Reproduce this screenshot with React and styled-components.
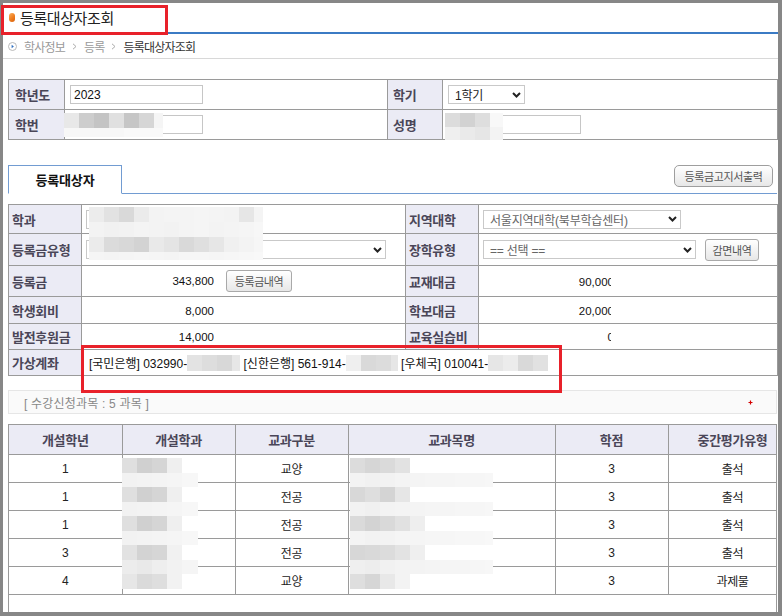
import React from 'react';
import styled, { createGlobalStyle } from 'styled-components';

const Global = createGlobalStyle`
  html, body { margin: 0; padding: 0; background: #fff; }
  body {
    font-family: "Liberation Sans", "Noto Sans CJK KR", sans-serif;
    font-size: 12px;
    color: #333;
  }
  * { box-sizing: border-box; }
`;

const Frame = styled.div`
  position: relative;
  width: 782px;
  height: 616px;
  border-style: solid;
  border-color: #878787;
  border-width: 3px 4px 4px 3px;
  background: #fff;
  display: flex;
  flex-direction: column;
`;

const TitleBar = styled.div`
  height: 31px;
  flex: none;
  border-bottom: 2px solid #3b7bc4;
  display: flex;
  align-items: center;
  gap: 5px;
  padding-left: 6px;
`;

const Bullet = styled.span`
  width: 6px;
  height: 9px;
  border-radius: 3px;
  background: linear-gradient(135deg, #f9b062 0%, #ef7d1e 55%, #d65f0c 100%);
`;

const Title = styled.h1`
  margin: 0;
  font-size: 15px;
  font-weight: normal;
  letter-spacing: -0.4px;
  color: #222;
`;

const Crumbs = styled.nav`
  height: 25px;
  flex: none;
  border-bottom: 1px solid #d8d8d8;
  display: flex;
  align-items: center;
  gap: 7px;
  padding-left: 5px;
`;

const Crumb = styled.span`
  font-size: 12px;
  letter-spacing: -0.8px;
  color: ${p => (p.$current ? '#333' : '#9a9a9a')};
`;

const CrumbIcon = () => (
  <svg width="9" height="9" viewBox="0 0 9 9">
    <circle cx="4.5" cy="4.5" r="4" fill="#fff" stroke="#b9b9b9" />
    <path d="M3.6 2.7 L5.9 4.5 L3.6 6.3 Z" fill="#2f6fc0" />
  </svg>
);

const Sep = () => (
  <svg width="5" height="7" viewBox="0 0 5 7">
    <path d="M1 0.8 L4 3.5 L1 6.2" fill="none" stroke="#aaa" strokeWidth="1" />
  </svg>
);

const Table = styled.table`
  width: 769px;
  flex: none;
  border-collapse: collapse;
  table-layout: fixed;
  margin: ${p => p.$top}px 0 0 5px;
`;

const Col = styled.col`
  width: ${p => p.$w}px;
`;

const Row = styled.tr`
  height: ${p => p.$h}px;
`;

const Label = styled.th`
  border: 1px solid #9a9a9a;
  background: #ebebf5;
  color: #4a4658;
  font-size: 13px;
  font-weight: bold;
  letter-spacing: -0.3px;
  text-align: left;
  padding: 0 0 0 ${p => p.$pad}px;
  white-space: nowrap;
`;

const Cell = styled.td`
  border: 1px solid #9a9a9a;
  padding: 0 0 0 ${p => p.$pad ?? 4}px;
  font-size: 12px;
  color: #222;
  white-space: nowrap;
`;

const Field = styled.input`
  width: ${p => p.$w}px;
  height: 19px;
  border: 1px solid #c6c6c6;
  padding: 0 3px;
  font-family: inherit;
  font-size: 12px;
  color: #111;
  vertical-align: middle;
  outline: none;
`;

const SelectBox = styled.div`
  display: inline-flex;
  align-items: center;
  justify-content: space-between;
  width: ${p => p.$w}px;
  height: 19px;
  border: 1px solid #c9c9c9;
  background: #fff;
  padding: 0 3px 0 6px;
  font-size: 12px;
  letter-spacing: -0.2px;
  color: ${p => (p.$muted ? '#666' : '#222')};
  vertical-align: middle;
`;

const Chevron = () => (
  <svg width="9" height="6" viewBox="0 0 9 6">
    <polyline points="1,1 4.5,4.5 8,1" fill="none" stroke="#222" strokeWidth="2" />
  </svg>
);

const Select = ({ w, muted, children }) => (
  <SelectBox $w={w} $muted={muted}>
    <span>{children}</span>
    <Chevron />
  </SelectBox>
);

const Btn = styled.button`
  width: ${p => p.$w}px;
  height: 22px;
  padding: 0;
  margin-left: ${p => p.$gap ?? 0}px;
  border: 1px solid #a9a9a9;
  border-radius: ${p => p.$r ?? 3}px;
  background: linear-gradient(#ffffff, #e7e7e7);
  font-family: inherit;
  font-size: 11px;
  letter-spacing: -0.4px;
  color: #555;
  vertical-align: middle;
`;

const Amount = styled.span`
  display: inline-block;
  width: 128px;
  text-align: right;
  overflow: hidden;
  white-space: nowrap;
  vertical-align: middle;
  font-size: 11.5px;
  color: #111;
  & > span {
    margin-right: ${p => (p.$clip ? '-3px' : '0')};
  }
`;

const TabBar = styled.div`
  flex: none;
  margin: 25px 1px 0 5px;
  height: 29px;
  border-bottom: 1px solid #729cd2;
  display: flex;
  justify-content: space-between;
  align-items: flex-start;
`;

const Tab = styled.div`
  width: 114px;
  height: 29px;
  border: 1px solid #729cd2;
  border-bottom-color: #fff;
  background: #fff;
  display: flex;
  align-items: center;
  justify-content: center;
  font-size: 13px;
  font-weight: bold;
  letter-spacing: -0.2px;
  color: #111;
`;

const PrintBtn = styled(Btn)`
  margin-right: 4px;
  border-color: #9e9e9e;
`;

const AccountLine = styled.span`
  display: inline-flex;
  align-items: center;
  font-size: 12px;
  color: #111;
  white-space: pre;
`;

const CountBar = styled.div`
  flex: none;
  margin: 14px 1px 0 5px;
  height: 24px;
  border: 1px solid #e6e6e6;
  background: #fafafa;
  display: flex;
  align-items: center;
  justify-content: space-between;
  padding: 0 23px 0 15px;
  font-size: 12px;
  letter-spacing: 0.2px;
  color: #888;
`;

const RedPlus = () => (
  <svg width="5" height="5" viewBox="0 0 5 5">
    <path d="M2.5 0.5 V4.5 M0.5 2.5 H4.5" stroke="#d40000" strokeWidth="1.2" />
  </svg>
);

const CourseWrap = styled.div`
  flex: 1;
  margin: 10px 1px 0 5px;
  border-left: 1px solid #9a9a9a;
  border-right: 1px solid #9a9a9a;
  overflow: hidden;
`;

const CourseTable = styled.table`
  width: 788px;
  border-collapse: collapse;
  table-layout: fixed;
`;

const HeadCell = styled.th`
  height: 30px;
  border: 1px solid #9a9a9a;
  border-left: ${p => (p.$first ? 'none' : '1px solid #9a9a9a')};
  background: #ebebf5;
  color: #4a4658;
  font-size: 13px;
  font-weight: bold;
  letter-spacing: -0.3px;
  text-align: center;
  padding: 0;
  white-space: nowrap;
`;

const DataCell = styled.td`
  height: 28px;
  border: 1px solid #9a9a9a;
  border-left: ${p => (p.$first ? 'none' : '1px solid #9a9a9a')};
  text-align: center;
  font-size: 12px;
  letter-spacing: -0.4px;
  color: #222;
  padding: 0;
`;

/* redaction mosaics */
const MosaicBox = styled.span`
  display: inline-flex;
  flex-direction: column;
  vertical-align: middle;
`;
const MosaicRow = styled.span`
  display: flex;
  height: ${p => p.$h}px;
`;
const MosaicCell = styled.span`
  display: block;
  width: ${p => p.$w}px;
  background: ${p => p.$c};
`;

const Mosaic = ({ rows }) => (
  <MosaicBox>
    {rows.map((row, i) => (
      <MosaicRow key={i} $h={row.h}>
        {row.c.map((cell, j) => {
          const [c, w] = Array.isArray(cell) ? cell : [cell, 15];
          return <MosaicCell key={j} $c={c} $w={w} />;
        })}
      </MosaicRow>
    ))}
  </MosaicBox>
);

const Overlay = styled.div`
  position: absolute;
  left: ${p => p.$x - 3}px;
  top: ${p => p.$y - 3}px;
  line-height: 0;
`;

const Annotation = styled.div`
  position: absolute;
  left: ${p => p.$x - 3}px;
  top: ${p => p.$y - 3}px;
  width: ${p => p.$w}px;
  height: ${p => p.$h}px;
  border: 3px solid #e8212a;
  pointer-events: none;
`;

const dark = ['#dfdfdf', '#d0d0d0', '#d5d5d5', '#efefef'];
const light = ['#f2f2f2', '#f3f3f3', '#f4f4f4', '#f5f5f5', ['#f7f7f7', 16]];

const redactions = [
  {
    x: 64, y: 113,
    rows: [
      { h: 15, c: ['#e8e8e8', '#cdcdcd', '#c4c4c4', '#e0e0e0', '#c6c6c6', '#d6d6d6', ['#f5f5f5', 9]] },
      { h: 9, c: [['#f7f7f7', 60], ['#f9f9f9', 39]] },
    ],
  },
  {
    x: 445, y: 113,
    rows: [
      { h: 14, c: ['#dcdcdc', '#d2d2d2', '#dedede', ['#f8f8f8', 13]] },
      { h: 13, c: ['#efefef', '#eaeaea', '#e6e6e6', ['#f3f3f3', 13]] },
    ],
  },
  {
    x: 89, y: 207,
    rows: [
      { h: 15, c: ['#ececec', '#e2e2e2', '#d9d9d9', '#ebebeb', '#f3f3f3', '#f4f4f4', '#f4f4f4', '#f5f5f5', '#f4f4f4', '#f3f3f3', '#e6e6e6', ['#f4f4f4', 9]] },
      { h: 15, c: ['#f3f3f3', '#f1f1f1', '#f2f2f2', '#f4f4f4', '#f3f3f3', '#f2f2f2', '#f4f4f4', '#f5f5f5', '#f3f3f3', '#f4f4f4', '#f5f5f5', ['#f7f7f7', 9]] },
      { h: 15, c: ['#ebebeb', '#dbdbdb', '#d8d8d8', '#d3d3d3', '#e9e9e9', '#e4e4e4', '#d9d9d9', '#dfdfdf', '#e6e6e6', '#f0f0f0', '#f3f3f3', ['#f6f6f6', 9]] },
      { h: 8, c: ['#f5f5f5', '#f4f4f4', '#f5f5f5', '#f6f6f6', '#f5f5f5', '#f4f4f4', '#f6f6f6', '#f6f6f6', '#f5f5f5', '#f6f6f6', '#f7f7f7', ['#f8f8f8', 9]] },
    ],
  },
  {
    x: 122, y: 458,
    rows: [
      { h: 15, c: dark }, { h: 14, c: light },
      { h: 15, c: dark }, { h: 14, c: light },
      { h: 15, c: dark }, { h: 14, c: light },
      { h: 15, c: ['#e2e2e2', '#d3d3d3', '#d6d6d6', '#f1f1f1'] },
      { h: 14, c: ['#ececec', '#e9e9e9', '#eeeeee', '#f2f2f2', ['#f5f5f5', 16]] },
      { h: 15, c: ['#e6e6e6', '#dadada', '#dedede', '#f2f2f2'] },
    ],
  },
  {
    x: 350, y: 458,
    rows: [
      { h: 15, c: ['#dcdcdc', '#d6d6d6', '#dadada', '#e2e2e2'] },
      { h: 14, c: ['#f3f3f3', '#f1f1f1', '#f2f2f2', '#f4f4f4', '#f4f4f4', '#f5f5f5', '#f5f5f5', '#f6f6f6', '#f6f6f6', ['#f7f7f7', 8]] },
      { h: 15, c: ['#d8d8d8', '#dedede', '#d4d4d4', '#e6e6e6'] },
      { h: 14, c: ['#f2f2f2', '#f0f0f0', '#f3f3f3', '#f4f4f4', '#f4f4f4', '#f5f5f5', '#f5f5f5', '#f6f6f6', '#f6f6f6', ['#f7f7f7', 8]] },
      { h: 15, c: ['#dadada', '#d3d3d3', '#d9d9d9', '#e1e1e1', '#eeeeee'] },
      { h: 14, c: ['#f4f4f4', '#f2f2f2', '#f3f3f3', '#f5f5f5', '#f5f5f5', '#f6f6f6', '#f6f6f6', '#f7f7f7', '#f7f7f7', ['#f8f8f8', 8]] },
      { h: 15, c: ['#d7d7d7', '#d9d9d9', '#dcdcdc', '#e3e3e3', '#efefef'] },
      { h: 14, c: ['#efefef', '#ededed', '#f1f1f1', '#f3f3f3', '#f3f3f3', '#f4f4f4', '#f5f5f5', '#f5f5f5', '#f6f6f6', ['#f7f7f7', 8]] },
      { h: 15, c: ['#dedede', '#d6d6d6', '#e8e8e8', '#f3f3f3'] },
    ],
  },
];

const acct1 = [{ h: 16, c: ['#e3e3e3', '#dddddd', '#d8d8d8', ['#e7e7e7', 8]] }];
const acct2 = [{ h: 16, c: ['#efefef', '#d9d9d9', '#dcdcdc', ['#e6e6e6', 7]] }];
const acct3 = [{ h: 16, c: ['#e6e6e6', '#ececec', '#d9d9d9', '#e1e1e1'] }];

const courses = [
  { year: '1', kind: '교양', credit: '3', evalType: '출석' },
  { year: '1', kind: '전공', credit: '3', evalType: '출석' },
  { year: '1', kind: '전공', credit: '3', evalType: '출석' },
  { year: '3', kind: '전공', credit: '3', evalType: '출석' },
  { year: '4', kind: '교양', credit: '3', evalType: '과제물' },
];

export default function App() {
  return (
    <>
      <Global />
      <Frame>
        <TitleBar>
          <Bullet />
          <Title>등록대상자조회</Title>
        </TitleBar>

        <Crumbs>
          <CrumbIcon />
          <Crumb>학사정보</Crumb>
          <Sep />
          <Crumb>등록</Crumb>
          <Sep />
          <Crumb $current>등록대상자조회</Crumb>
        </Crumbs>

        <Table $top={20}>
          <colgroup>
            <Col $w={56} />
            <Col $w={323} />
            <Col $w={55} />
            <Col $w={335} />
          </colgroup>
          <tbody>
            <Row $h={30}>
              <Label $pad={6}>학년도</Label>
              <Cell $pad={5}><Field $w={133} defaultValue="2023" /></Cell>
              <Label $pad={5}>학기</Label>
              <Cell $pad={5}><Select w={77}>1학기</Select></Cell>
            </Row>
            <Row $h={30}>
              <Label $pad={6}>학번</Label>
              <Cell $pad={5}><Field $w={133} defaultValue="" /></Cell>
              <Label $pad={5}>성명</Label>
              <Cell $pad={5}><Field $w={133} defaultValue="" /></Cell>
            </Row>
          </tbody>
        </Table>

        <TabBar>
          <Tab>등록대상자</Tab>
          <PrintBtn $w={99} $r={5}>등록금고지서출력</PrintBtn>
        </TabBar>

        <Table $top={10}>
          <colgroup>
            <Col $w={73} />
            <Col $w={324} />
            <Col $w={73} />
            <Col $w={299} />
          </colgroup>
          <tbody>
            <Row $h={29}>
              <Label $pad={3}>학과</Label>
              <Cell><Field $w={170} defaultValue="" /></Cell>
              <Label $pad={3}>지역대학</Label>
              <Cell><Select w={198} muted>서울지역대학(북부학습센터)</Select></Cell>
            </Row>
            <Row $h={32}>
              <Label $pad={3}>등록금유형</Label>
              <Cell><Select w={300} muted> </Select></Cell>
              <Label $pad={3}>장학유형</Label>
              <Cell>
                <Select w={213} muted>== 선택 ==</Select>
                <Btn $w={54} $gap={9}>감면내역</Btn>
              </Cell>
            </Row>
            <Row $h={31}>
              <Label $pad={3}>등록금</Label>
              <Cell>
                <Amount><span>343,800</span></Amount>
                <Btn $w={66} $gap={12}>등록금내역</Btn>
              </Cell>
              <Label $pad={3}>교재대금</Label>
              <Cell><Amount $clip><span>90,000</span></Amount></Cell>
            </Row>
            <Row $h={27}>
              <Label $pad={3}>학생회비</Label>
              <Cell><Amount><span>8,000</span></Amount></Cell>
              <Label $pad={3}>학보대금</Label>
              <Cell><Amount $clip><span>20,000</span></Amount></Cell>
            </Row>
            <Row $h={26}>
              <Label $pad={3}>발전후원금</Label>
              <Cell><Amount><span>14,000</span></Amount></Cell>
              <Label $pad={3}>교육실습비</Label>
              <Cell><Amount $clip><span>0</span></Amount></Cell>
            </Row>
            <Row $h={26}>
              <Label $pad={3}>가상계좌</Label>
              <Cell colSpan={3} $pad={7}>
                <AccountLine>
                  {'[국민은행] 032990-'}
                  <Mosaic rows={acct1} />
                  {' [신한은행] 561-914-'}
                  <Mosaic rows={acct2} />
                  {' [우체국] 010041-'}
                  <Mosaic rows={acct3} />
                </AccountLine>
              </Cell>
            </Row>
          </tbody>
        </Table>

        <CountBar>
          <span>[ 수강신청과목 : 5 과목 ]</span>
          <RedPlus />
        </CountBar>

        <CourseWrap>
          <CourseTable>
            <colgroup>
              <Col $w={113} />
              <Col $w={113} />
              <Col $w={113} />
              <Col $w={207} />
              <Col $w={113} />
              <Col $w={129} />
            </colgroup>
            <thead>
              <tr>
                <HeadCell $first>개설학년</HeadCell>
                <HeadCell>개설학과</HeadCell>
                <HeadCell>교과구분</HeadCell>
                <HeadCell>교과목명</HeadCell>
                <HeadCell>학점</HeadCell>
                <HeadCell>중간평가유형</HeadCell>
              </tr>
            </thead>
            <tbody>
              {courses.map((c, i) => (
                <tr key={i}>
                  <DataCell $first>{c.year}</DataCell>
                  <DataCell />
                  <DataCell>{c.kind}</DataCell>
                  <DataCell />
                  <DataCell>{c.credit}</DataCell>
                  <DataCell>{c.evalType}</DataCell>
                </tr>
              ))}
            </tbody>
          </CourseTable>
        </CourseWrap>

        {redactions.map((r, i) => (
          <Overlay key={i} $x={r.x} $y={r.y}>
            <Mosaic rows={r.rows} />
          </Overlay>
        ))}

        <Annotation $x={1} $y={5} $w={167} $h={30} />
        <Annotation $x={81} $y={345} $w={481} $h={48} />
      </Frame>
    </>
  );
}
